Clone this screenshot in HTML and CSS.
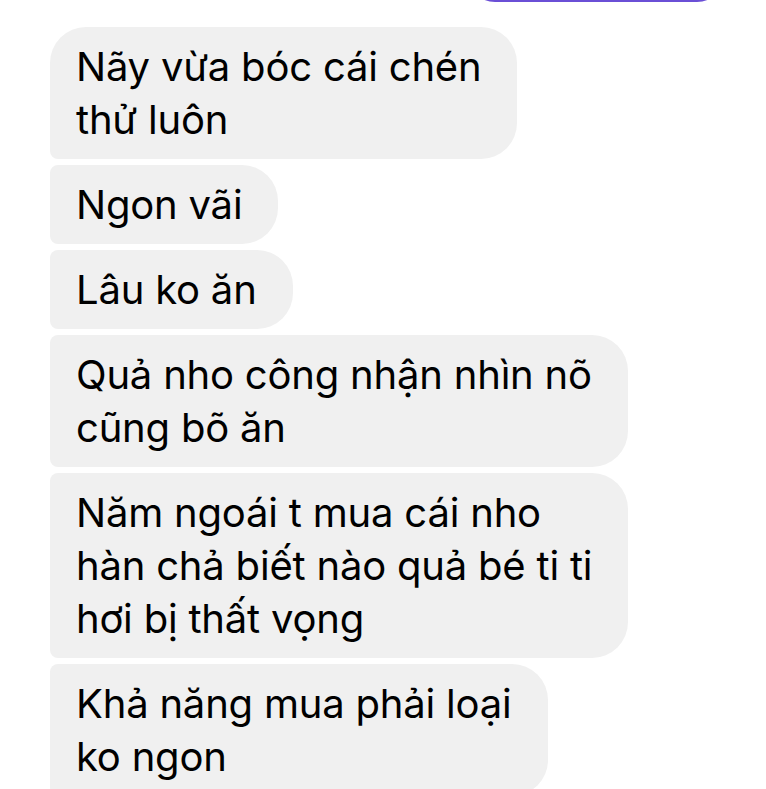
FILE: index.html
```html
<!DOCTYPE html>
<html lang="vi">
<head>
  <meta charset="UTF-8">
  <title>Chat</title>
  <link rel="stylesheet" href="styles.css">
</head>
<body>

<div class="chat">
  <div class="msg msg-out"></div>

  <div class="msg msg-in first">Nãy vừa bóc cái chén<br>thử luôn</div>
  <div class="msg msg-in">Ngon vãi</div>
  <div class="msg msg-in">Lâu ko ăn</div>
  <div class="msg msg-in">Quả nho công nhận nhìn nõ<br>cũng bõ ăn</div>
  <div class="msg msg-in">Năm ngoái t mua cái nho<br>hàn chả biết nào quả bé ti ti<br>hơi bị thất vọng</div>
  <div class="msg msg-in">Khả năng mua phải loại<br>ko ngon</div>
</div>

</body>
</html>
```

FILE: styles.css
```css
body {
  margin: 0;
  background: #fff;
  font-family: Inter, "Liberation Sans", sans-serif;
  color: #000;
  overflow: hidden;
}
.chat {
  display: flex;
  flex-direction: column;
  align-items: flex-start;
  gap: 6px;
  padding-left: 50px;
}
.msg {
  font-size: 40px;
  line-height: 53px;
  letter-spacing: -0.2px;
}
.msg-out {
  align-self: flex-end;
  width: 258px;
  height: 60px;
  margin-top: -58px;
  margin-right: 41px;
  margin-bottom: 19px;
  background: #6a4fd6;
  border-radius: 0 0 28px 28px;
}
.msg-in {
  background: #f0f0f0;
  padding: 13px 36px 13px 26px;
  border-radius: 8px 36px 36px 8px;
}
.msg-in.first {
  border-top-left-radius: 36px;
}
```
